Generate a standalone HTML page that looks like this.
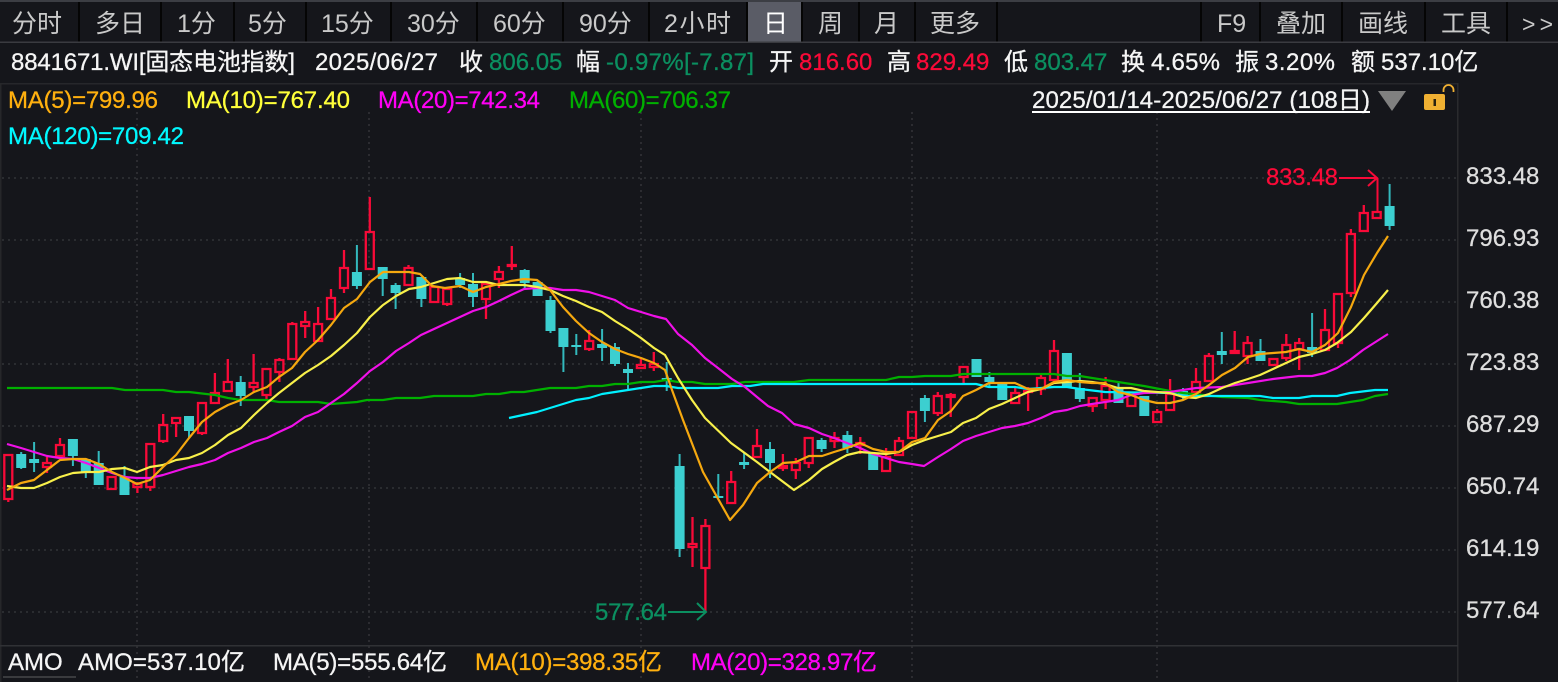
<!DOCTYPE html>
<html lang="zh"><head><meta charset="utf-8"><title>K线图</title>
<style>
html,body{margin:0;padding:0;background:#15161b;width:1558px;height:682px;overflow:hidden}
svg{display:block}
text{font-family:"Liberation Sans","Noto Sans CJK SC",sans-serif;font-size:24px;white-space:pre;stroke-width:.3px}
.t text{font-size:25px;fill:#c9c9c9;stroke-width:0;font-family:"Liberation Sans","WenQuanYi Zen Hei","Noto Sans CJK SC",sans-serif}
.w{fill:#f5f5f5;stroke:#f5f5f5}.g{fill:#0b8f60;stroke:#0b8f60}.r{fill:#fa0a38;stroke:#fa0a38}
.ax{fill:#dedede;stroke:#dedede}
.o{fill:#ffb00f;stroke:#ffb00f}.y{fill:#ffff3a;stroke:#ffff3a}.m{fill:#ff00f5;stroke:#ff00f5}.n{fill:#00b000;stroke:#00b000}.c{fill:#00f8ff;stroke:#00f8ff}
</style></head><body>
<svg width="1558" height="682" viewBox="0 0 1558 682" xmlns="http://www.w3.org/2000/svg">
<rect width="1558" height="682" fill="#15161b"/>
<!-- top strip -->
<rect width="1558" height="2" fill="#3c3e44"/>
<!-- toolbar -->
<rect x="748" y="2" width="54" height="40" fill="#5a5c66"/>
<path d="M79 2V42M161 2V42M234 2V42M306 2V42M391 2V42M477 2V42M563 2V42M649 2V42M747 2V42M802 2V42M859 2V42M915 2V42M997 2V42M1201 2V42M1260 2V42M1342 2V42M1425 2V42M1507 2V42" stroke="#050505" stroke-width="2"/>
<rect y="41.500" width="1558" height="1.500" fill="#3a3b40"/>
<g class="t">
<text x="12" y="32">分时</text><text x="95" y="32">多日</text><text x="177" y="32">1分</text><text x="248" y="32">5分</text><text x="321" y="32">15分</text><text x="407" y="32">30分</text><text x="493" y="32">60分</text><text x="579" y="32">90分</text><text x="664" y="32" textLength="67">2小时</text><text x="763" y="32" style="fill:#fff">日</text><text x="818" y="32">周</text><text x="874" y="32">月</text><text x="930" y="32">更多</text>
<text x="1217" y="32">F9</text><text x="1276" y="32">叠加</text><text x="1358" y="32">画线</text><text x="1441" y="32">工具</text><text x="1522" y="32" textLength="31" style="font-size:23px">&gt;&gt;</text>
</g>
<!-- info row -->
<text class="w" x="11" y="70" textLength="284">8841671.WI[固态电池指数]</text>
<text class="w" x="315" y="70" textLength="123">2025/06/27</text>
<text class="w" x="459" y="70">收</text><text class="g" x="489" y="70">806.05</text>
<text class="w" x="576" y="70">幅</text><text class="g" x="606" y="70" textLength="148">-0.97%[-7.87]</text>
<text class="w" x="769" y="70">开</text><text class="r" x="799" y="70">816.60</text>
<text class="w" x="887" y="70">高</text><text class="r" x="916" y="70">829.49</text>
<text class="w" x="1004" y="70">低</text><text class="g" x="1034" y="70">803.47</text>
<text class="w" x="1121" y="70">换</text><text class="w" x="1151" y="70" textLength="69">4.65%</text>
<text class="w" x="1235" y="70">振</text><text class="w" x="1265" y="70" textLength="70">3.20%</text>
<text class="w" x="1351" y="70">额</text><text class="w" x="1381" y="70">537.10亿</text>
<rect y="83" width="1458" height="1.500" fill="#26272b"/>
<rect x="1457" y="83" width="1.500" height="599" fill="#2a2b2e"/>
<rect x="0" y="83" width="1.500" height="599" fill="#26272a"/>
<!-- grid -->
<g stroke="#323337" stroke-width="1.600" stroke-dasharray="2 4" fill="none">
<path d="M2 178H1458M2 240H1458M2 302H1458M2 364H1458M2 426H1458M2 488H1458M2 550H1458M2 612H1458"/>
<path d="M137 112V682M369 112V682M641 112V682M912 112V682M1157 112V682"/>
</g>
<!-- red candles -->
<path fill="none" stroke="#f80a38" stroke-width="2.300" d="
M4.300 455h8V499h-8zM8.300 499V502
M43 463h8V467h-8zM47 457V463M47 467V473
M56 445h8V456h-8zM60 438V445
M107.600 477h8V489h-8z
M133.400 484h8V487h-8zM137.400 482V484M137.400 487V493
M146.300 444h8V487h-8zM150.300 487V491
M159.200 425h8V441h-8zM163.200 414V425M163.200 441V443
M172.100 418h8V423h-8zM176.100 423V437
M198 403h8V433h-8zM202 402V403M202 433V435
M210.900 393h8V403h-8zM214.900 373V393
M223.800 382h8V391h-8zM227.800 359V382
M249.600 383h8V387h-8zM253.600 354V383M253.600 387V392
M262.500 369h8V395h-8zM266.500 395V399
M275.400 360h8V372h-8zM279.400 358V360M279.400 372V382
M288.300 324h8V359h-8zM292.300 322V324M292.300 359V360
M301.200 322h8V326h-8zM305.200 311V322M305.200 326V338
M314.100 324h8V341h-8zM318.100 307V324
M327 298h8V319h-8zM331 289V298
M340 268h8V288h-8zM344 250V268M344 288V293
M365.800 232h8V269h-8zM369.800 197V232
M404.500 268h8V285h-8zM408.500 265V268M408.500 285V286
M430.300 287h8V302h-8z
M443.200 289h8V304h-8zM447.200 304V306
M482 284h8V299h-8zM486 299V319
M494.900 272h8V279h-8zM498.900 266V272M498.900 279V288
M507.800 265h8V266h-8zM511.800 246V265M511.800 266V270
M585.200 341h8V349h-8zM589.200 330V341M589.200 349V351
M636.900 365h8V368h-8zM640.900 358V365
M649.800 364h8V367h-8zM653.800 352V364M653.800 367V371
M688.500 544h8V547h-8zM692.500 517V544M692.500 547V567
M701.400 526h8V568h-8zM705.400 519V526M705.400 568V612
M727.200 482h8V503h-8zM731.200 471V482M731.200 503V504
M753 446h8V457h-8zM757 429V446
M778.900 466h8V468h-8zM782.900 454V466M782.900 468V471
M791.800 463h8V470h-8zM795.800 458V463M795.800 470V479
M804.700 438h8V463h-8zM808.700 463V468
M830.500 438h8V441h-8zM834.500 432V438M834.500 441V448
M856.300 443h8V445h-8zM860.300 437V443M860.300 445V454
M882.100 457h8V471h-8zM886.100 448V457
M895 441h8V455h-8zM899 437V441
M908 412h8V438h-8z
M933.800 396h8V413h-8zM937.800 392V396M937.800 413V416
M946.700 395h8V397h-8zM950.700 393V395M950.700 397V417
M959.600 367h8V377h-8zM963.600 377V383
M1011.200 393h8V403h-8zM1015.200 387V393
M1024.100 391h8V392h-8zM1028.100 387V391M1028.100 392V411
M1037 378h8V389h-8zM1041 375V378M1041 389V395
M1050 351h8V380h-8zM1054 340V351
M1088.700 398h8V406h-8zM1092.700 406V412
M1101.600 386h8V400h-8zM1105.600 377V386M1105.600 400V409
M1127.400 395h8V406h-8z
M1153.200 412h8V422h-8zM1157.200 409V412
M1166.100 394h8V410h-8zM1170.100 379V394M1170.100 410V411
M1192 382h8V392h-8zM1196 368V382
M1204.900 356h8V381h-8zM1208.900 353V356M1208.900 381V382
M1230.700 351h8V353h-8zM1234.700 331V351
M1243.600 343h8V356h-8zM1247.600 336V343M1247.600 356V364
M1269.400 359h8V365h-8z
M1282.300 345h8V358h-8zM1286.300 334V345M1286.300 358V361
M1295.200 343h8V349h-8zM1299.200 338V343M1299.200 349V370
M1321 330h8V350h-8zM1325 309V330
M1334 294h8V343h-8zM1338 293V294M1338 343V348
M1346.900 234h8V293h-8zM1350.900 229V234M1350.900 293V297
M1359.800 213h8V231h-8zM1363.800 205V213M1363.800 231V232
M1372.700 212h8V218h-8z"/>
<!-- teal wicks -->
<path fill="none" stroke="#33b9bd" stroke-width="2" d="M21.200 452V469M34.100 442V472M72.900 439V466M85.800 459V478M98.700 451V485M124.500 466V495M189 416V438M240.700 376V406M356.900 245V289M382.700 267V296M395.600 283V309M421.400 277V307M460.100 273V288M473 273V307M524.700 269V289M537.600 281V296M550.500 296V333M563.400 328V372M576.300 334V355M602.100 329V361M615 343V366M628 363V391M666.700 362V391M679.600 454V557M718.300 474V498M744.100 453V469M770 442V478M821.600 438V452M847.400 431V453M873.200 453V470M924.900 395V422M976.500 359V377M989.400 372V388M1002.300 382V400M1066.900 353V387M1079.800 373V402M1118.500 381V403M1144.300 396V416M1183 388V400M1221.800 332V364M1260.500 339V361M1312.100 313V357M1389.600 184V230"/>
<!-- teal bodies -->
<path fill="#3ccfd0" d="M16.200 454h10V468h-10zM29.100 459h10V463h-10zM67.900 439h10V456h-10zM80.800 459h10V473h-10zM93.700 463h10V485h-10zM119.500 477h10V495h-10zM184 416h10V431h-10zM235.700 382h10V396h-10zM351.900 272h10V286h-10zM377.700 267h10V279h-10zM390.600 285h10V293h-10zM416.400 277h10V299h-10zM455.100 278h10V285h-10zM468 284h10V297h-10zM519.700 270h10V283h-10zM532.600 282h10V296h-10zM545.500 300h10V331h-10zM558.400 328h10V347h-10zM571.300 345h10V347h-10zM597.100 344h10V348h-10zM610 347h10V364h-10zM623 369h10V373h-10zM661.700 378h10V381h-10zM674.600 466h10V549h-10zM713.300 496h10V498h-10zM739.100 462h10V465h-10zM765 449h10V463h-10zM816.600 440h10V449h-10zM842.400 435h10V448h-10zM868.200 453h10V470h-10zM919.900 398h10V411h-10zM971.500 359h10V377h-10zM984.400 377h10V382h-10zM997.300 382h10V400h-10zM1061.900 353h10V387h-10zM1074.800 388h10V399h-10zM1113.500 388h10V403h-10zM1139.300 396h10V416h-10zM1178 391h10V396h-10zM1216.800 351h10V355h-10zM1255.500 351h10V361h-10zM1307.100 347h10V353h-10zM1384.600 206h10V226h-10z"/>
<!-- MA lines -->
<g fill="none" stroke-width="2.200" stroke-linejoin="round">
<polyline stroke="#00b000" points="7,388 112,388 125,390 163,390 176,392 189,392 215,395 228,398 241,400 267,400 279,402 318,402 331,404 357,402 367,400 383,400 396,398 420,398 434,396 473,396 486,394 499,394 511,392 524,392 550,388 576,388 589,386 602,386 615,384 628,384 641,382 654,382 666,380 678,382 692,382 705,384 732,384 745,382 794,382 809,380 886,380 899,377 912,377 925,376 951,376 963,374 1054,374 1067,376 1080,376 1092,378 1118,382 1144,386 1170,391 1183,393 1222,397 1248,398 1260,400 1286,402 1299,404 1337,404 1363,400 1375,396 1388,394"/>
<polyline stroke="#00f0ff" points="509,418 537,412 550,408 563,404 576,400 589,398 602,394 628,390 641,388 654,386 666,386 678,388 718,388 732,386 750,386 763,384 976,384 989,387 1015,387 1028,389 1054,387 1067,387 1080,389 1105,392 1170,393 1183,396 1222,396 1260,396 1273,398 1299,398 1312,396 1337,396 1350,393 1375,390 1388,390"/>
<polyline stroke="#f010e8" points="7,444 21,448 34,452 47,456 60,458 73,459 86,463 99,468 112,473 125,477 137,478 150,478 163,475 176,471 189,467 202,464 215,460 228,453 241,448 254,442 267,438 279,432 292,426 305,417 318,412 331,403 344,394 357,383 370,371 383,362 396,351 409,343 421,335 434,329 447,323 460,317 473,311 486,307 499,301 511,295 524,289 537,288 550,288 563,290 576,290 589,292 602,296 615,300 628,308 641,312 654,316 666,319 678,334 692,345 705,358 718,368 732,379 745,387 757,397 768,406 782,413 794,424 809,428 822,434 834,438 847,443 860,448 873,454 886,458 899,462 912,464 924,466 938,457 951,449 963,441 976,436 989,432 1002,428 1015,426 1028,423 1041,418 1054,412 1067,410 1080,406 1092,404 1105,402 1118,400 1131,395 1144,393 1170,392 1183,390 1196,388 1222,387 1248,383 1273,379 1299,376 1312,376 1325,373 1337,368 1350,360 1363,350 1388,334"/>
<polyline stroke="#f8f04a" points="7,486 21,488 34,488 47,483 60,477 73,473 86,472 99,472 112,469 125,468 137,472 150,467 163,465 176,460 189,458 202,453 215,445 228,435 241,428 254,415 267,403 279,393 292,383 305,373 318,365 331,356 344,345 357,333 370,317 383,305 396,296 409,289 421,287 434,283 447,279 460,278 473,282 486,282 499,285 511,285 524,285 537,287 550,290 563,296 576,301 589,307 602,312 615,321 628,329 641,338 654,348 665,355 678,378 692,400 705,418 731,443 757,462 770,472 794,490 809,480 822,469 834,462 847,455 860,452 873,453 886,454 899,452 912,445 925,440 938,436 951,432 963,423 976,418 989,409 1002,404 1015,398 1028,392 1041,389 1054,383 1067,382 1080,381 1092,382 1105,384 1118,388 1131,388 1144,391 1157,392 1170,393 1183,397 1196,398 1209,394 1222,388 1235,383 1248,379 1260,375 1273,369 1286,363 1299,357 1312,354 1325,350 1337,343 1351,332 1364,318 1377,303 1388,290"/>
<polyline stroke="#f5a80f" points="7,490 21,483 34,480 47,470 60,460 73,459 86,459 99,464 112,472 125,478 137,484 150,480 163,467 176,455 189,438 202,422 215,412 228,405 241,400 254,392 267,387 279,377 292,368 305,352 318,340 331,325 344,308 357,299 370,282 383,272 396,272 409,272 420,274 432,286 445,288 460,286 473,292 486,287 499,284 511,281 524,279 537,280 550,290 563,307 576,321 589,333 602,342 615,349 628,354 641,358 654,363 665,370 672,390 683,420 703,472 730,520 743,505 757,483 770,472 783,463 796,462 809,456 822,456 834,452 847,448 860,443 873,449 886,452 899,452 912,442 925,438 938,420 951,411 963,396 976,390 989,383 1015,383 1028,389 1041,389 1054,382 1067,380 1080,382 1092,383 1105,383 1118,392 1131,395 1144,400 1157,403 1170,403 1183,400 1196,394 1209,385 1222,375 1235,368 1248,357 1260,354 1273,353 1286,352 1299,349 1312,352 1325,345 1338,333 1351,307 1364,275 1377,253 1388,236"/>
</g>
<!-- annotations -->
<text class="r" x="1266" y="185" textLength="72">833.48</text>
<path d="M1339 178H1377M1368 170L1377 178L1368 186M1377.500 178V212" fill="none" stroke="#f80a38" stroke-width="2"/>
<text class="g" x="595" y="620" textLength="72">577.64</text>
<path d="M668 612H706M697 603L706 612L697 620" fill="none" stroke="#0b8f60" stroke-width="2"/>
<!-- MA legends -->
<text class="o" x="8" y="108" textLength="150">MA(5)=799.96</text>
<text class="y" x="186" y="108" textLength="164">MA(10)=767.40</text>
<text class="m" x="378" y="108" textLength="162">MA(20)=742.34</text>
<text class="n" x="569" y="108" textLength="162">MA(60)=706.37</text>
<text class="c" x="8" y="144" textLength="176">MA(120)=709.42</text>
<!-- date range -->
<text class="w" x="1032" y="108" textLength="338">2025/01/14-2025/06/27 (108日)</text>
<rect x="1032" y="111" width="338" height="2" fill="#fff"/>
<path d="M1378 91H1406L1392 111Z" fill="#808080"/>
<rect x="1424" y="94" width="21" height="16" rx="2" fill="#f0b032"/>
<path d="M1433.500 99h2.500v7h-2.500z" fill="#2a2210"/>
<path d="M1443.500 92V90a5 5 0 0 1 10 0V92" fill="none" stroke="#f0b032" stroke-width="1.800"/>
<!-- axis -->
<g>
<text class="ax" x="1466" y="184">833.48</text>
<text class="ax" x="1466" y="246">796.93</text>
<text class="ax" x="1466" y="308">760.38</text>
<text class="ax" x="1466" y="370">723.83</text>
<text class="ax" x="1466" y="432">687.29</text>
<text class="ax" x="1466" y="494">650.74</text>
<text class="ax" x="1466" y="556">614.19</text>
<text class="ax" x="1466" y="618">577.64</text>
</g>
<!-- bottom pane -->
<rect x="0" y="645" width="1458" height="1.500" fill="#303135"/>
<text class="w" x="8" y="670">AMO</text>
<rect x="3" y="676" width="73" height="2" fill="#3a3b3e"/>
<text class="w" x="78" y="670" textLength="167">AMO=537.10亿</text>
<text class="w" x="273" y="670" textLength="174">MA(5)=555.64亿</text>
<text class="o" x="475" y="670" textLength="187">MA(10)=398.35亿</text>
<text class="m" x="691" y="670" textLength="186">MA(20)=328.97亿</text>
</svg>
</body></html>
